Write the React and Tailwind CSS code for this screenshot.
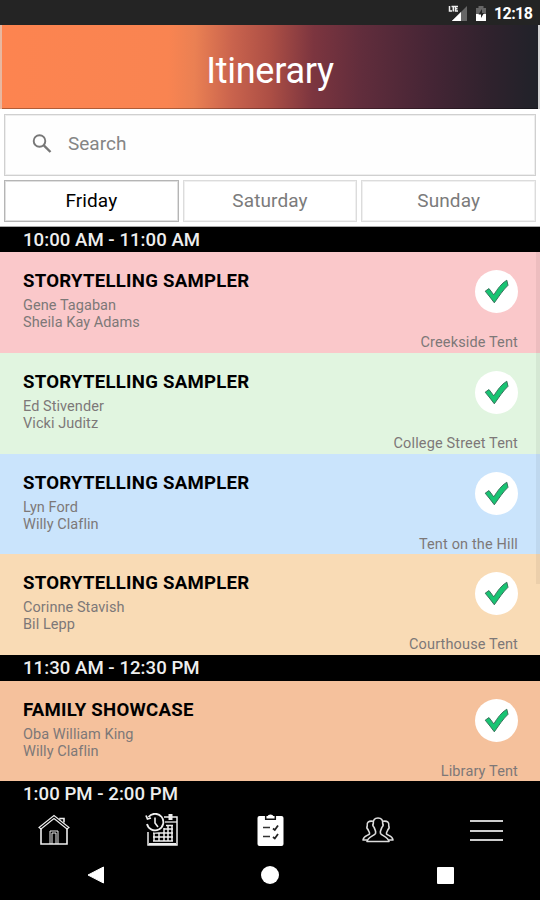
import React, { useState } from 'react';

const days = ['Friday', 'Saturday', 'Sunday'];

const schedule = [
    {
        time: '10:00 AM - 11:00 AM',
        events: [
            { title: 'STORYTELLING SAMPLER', people: ['Gene Tagaban', 'Sheila Kay Adams'], venue: 'Creekside Tent', color: 'bg-[#fac8ca]' },
            { title: 'STORYTELLING SAMPLER', people: ['Ed Stivender', 'Vicki Juditz'], venue: 'College Street Tent', color: 'bg-[#e1f5e0]' },
            { title: 'STORYTELLING SAMPLER', people: ['Lyn Ford', 'Willy Claflin'], venue: 'Tent on the Hill', color: 'bg-[#cae4fc]' },
            { title: 'STORYTELLING SAMPLER', people: ['Corinne Stavish', 'Bil Lepp'], venue: 'Courthouse Tent', color: 'bg-[#f9dbb5]' },
        ],
    },
    {
        time: '11:30 AM - 12:30 PM',
        events: [
            { title: 'FAMILY SHOWCASE', people: ['Oba William King', 'Willy Claflin'], venue: 'Library Tent', color: 'bg-[#f5c19c]' },
        ],
    },
    { time: '1:00 PM - 2:00 PM', events: [] },
];

const StatusBar = () => (
    <div className="h-[25px] shrink-0 bg-[#242424] flex items-center justify-end pr-2 pt-[3px]">
        <svg className="w-5 h-5" viewBox="0 0 20 20">
            <path d="M19 2V17H4Z" fill="#666" />
            <path d="M13 8V17H4Z" fill="#fff" />
            <path d="M0 1H10V9H0Z" fill="#242424" />
            <path d="M13 8.5V17H4Z" fill="#fff" />
            <path d="M1.5 2V7H4M3.5 2.5H7M5.3 2.5V7.5M10 2.5H7.5V7H10M7.5 4.7H9.5" fill="none" stroke="#eee" strokeWidth="1.5" />
        </svg>
        <svg className="w-3 h-5 ml-[7px]" viewBox="0 0 12 20">
            <path d="M3.5 2H8.5V4H11V17H1V4H3.5Z" fill="#666" />
            <path d="M1 10H11V17H1Z" fill="#fff" />
            <path d="M7 5L3.5 10.5H6V14L9 9H7Z" fill="#242424" />
        </svg>
        <span className="ml-[7px] w-[38px] text-base leading-5 font-bold text-white whitespace-nowrap tracking-[-0.6px]">12:18</span>
    </div>
);

const CheckBadge = () => (
    <svg className="w-[43px] h-[43px]" viewBox="0 0 43 43">
        <circle cx="21.5" cy="21.5" r="21.5" fill="#fff" />
        <path d="M10.2 21.2L14 18.6L18.8 24.9C22.4 19 26.3 13.5 31.8 10.2L33 15.3C28 20 24 26.2 19.3 32.8C16.5 29.2 13.7 25 10.2 21.2Z" fill="#18c473" stroke="#38735c" strokeWidth="1" strokeLinejoin="round" />
    </svg>
);

const EventRow = ({ event }) => (
    <div className={`h-[100.7px] shrink-0 pl-[23px] pr-[22px] pt-[18px] flex justify-between ${event.color}`}>
        <div>
            <h2 className="text-[18.6px] leading-[22px] font-bold text-black tracking-[0.26px] whitespace-nowrap">{event.title}</h2>
            <div className="mt-[5px] text-[14.5px] leading-[17px] text-[#7d7878] tracking-[0.06px]">
                {event.people.map((name) => <p key={name}>{name}</p>)}
            </div>
        </div>
        <div className="flex flex-col items-end">
            <CheckBadge />
            <p className="mt-[21px] text-[14.5px] leading-[17px] text-[#7d7878] tracking-[0.14px] whitespace-nowrap">{event.venue}</p>
        </div>
    </div>
);

const HomeIcon = () => (
    <svg className="w-8 h-8" viewBox="0 0 32 32" fill="none" stroke="#eee" strokeWidth="1.6">
        <path d="M1 13.5L16 1.5L31 13.5L29 15L16 4.5L3 15Z" strokeWidth="1.1" />
        <path d="M3 14V30H29V14M22 5.5V4.5H26V8.5" />
        <path d="M12 30V17H20V30M14 30V19H18V30" strokeWidth="1" />
    </svg>
);

const CalendarIcon = () => (
    <svg className="w-[34px] h-[34px]" viewBox="0 0 34 34" fill="none" stroke="#eee" strokeWidth="1.5">
        <path d="M19 4H32V32H3V19" />
        <path d="M4 31H31" strokeWidth="2" />
        <path d="M20 9H32" strokeWidth="1.3" />
        <path d="M25.5 1V7" strokeWidth="4" />
        <path d="M9 20V28M14 20V28M19 15V28M23 13V28M27 13V28M8 20H28M8 24H28M8 28H28M19 16H28M21 12.5H28" strokeWidth="1.5" />
        <circle cx="10" cy="10" r="9.5" fill="#000" stroke="none" />
        <path d="M3.5 4A8.3 8.3 0 1 1 2 11M1 2.5L2.5 6L6 5" strokeWidth="1.8" />
        <path d="M10 4.5V10L13 14" strokeWidth="1.6" />
    </svg>
);

const ClipboardIcon = () => (
    <svg className="w-[27px] h-[34px]" viewBox="0 0 27 34">
        <rect x="0.5" y="3" width="26" height="30" rx="2" fill="#fff" />
        <path d="M8.5 6H18.5V3.5H16.5C16 0.8 11 0.8 10.5 3.5H8.5Z" fill="#fff" />
        <path d="M8.7 3V6.3H18.3V3" fill="none" stroke="#111" strokeWidth="1.5" />
        <path d="M6 14.5H13M6 23.5H13" stroke="#333" strokeWidth="1.4" />
        <path d="M16 15.5L17.8 17L21 12.5M16 24L17.8 25.5L21 21" fill="none" stroke="#222" strokeWidth="1.8" />
    </svg>
);

const PeopleIcon = () => (
    <svg className="w-8 h-[26px]" viewBox="0 0 32 26" fill="none" stroke="#ddd" strokeWidth="1.6" strokeLinejoin="round">
        <path d="M16 1C12.5 1 11 3 11.3 6.5C10.4 8 11.3 9.7 12.2 10.5C13 13.5 14 13.5 13.6 16.2C12.7 19 6 19.2 5 24.5H27C26 19.2 19.3 19 18.4 16.2C18 13.5 19 13.5 19.8 10.5C20.7 9.7 21.6 8 20.7 6.5C21 3 19.5 1 16 1Z" />
        <path d="M11 4.3C7 3.5 4.5 5.3 5.2 9C4.5 10.7 5.3 12 6 12.5C6.5 14.5 8 15 7.5 17C6 18.8 1.5 18.5 1 23H5" />
        <path d="M21 4.3C25 3.5 27.5 5.3 26.8 9C27.5 10.7 26.7 12 26 12.5C25.5 14.5 24 15 24.5 17C26 18.8 30.5 18.5 31 23H27" />
    </svg>
);

const MenuIcon = () => (
    <svg className="w-[33px] h-[23px]" viewBox="0 0 33 23" fill="none" stroke="#ccc" strokeWidth="2">
        <path d="M0 2H33M0 12H33M0 21H33" />
    </svg>
);

const App = () => {
    const [day, setDay] = useState('Friday');

    return (
        <div className="w-[540px] h-[900px] overflow-hidden bg-black flex flex-col font-[Roboto,sans-serif]">
            <StatusBar />

            {/* Header */}
            <header className="mx-0.5 h-[84px] shrink-0 flex items-center justify-center pt-2 border-b border-black/30 bg-[linear-gradient(91deg,#fd8450_0%,#f98451_31%,#ea8053_36%,#c9634d_43%,#ad4f45_50%,#7c353f_58%,#612d3c_67%,#452535_80%,#2f222d_91%,#202229_100%)] shadow-[-2px_0_0_#e8b7a0,2px_0_0_#d5d5d5]">
                <h1 className="text-[36px] leading-[42px] text-white tracking-[-0.25px]">Itinerary</h1>
            </header>

            {/* Search and day tabs */}
            <div className="h-[118px] shrink-0 bg-white px-1 pt-[5px] border-b border-[#aaa]">
                <div className="h-[62px] border-[1.5px] border-[#d0d0d0] shadow-[inset_0_0_0_1px_#eee] bg-[#fefefe] flex items-center pl-[27px] pb-0.5">
                    <svg className="w-5 h-5" viewBox="0 0 20 20" fill="none" stroke="#777" strokeWidth="1.9">
                        <circle cx="7.5" cy="7" r="5.8" />
                        <path d="M11.8 11.3L18.5 18" strokeWidth="2.4" />
                    </svg>
                    <input placeholder="Search" className="ml-4 w-96 bg-transparent text-[19px] leading-6 tracking-[0px] placeholder:text-[#858585] focus:outline-none" />
                </div>
                <div className="mt-1 grid grid-cols-3 gap-1">
                    {days.map((d) => (
                        <button
                            key={d}
                            onClick={() => setDay(d)}
                            className={`h-[42px] border pb-px text-[19px] leading-6 tracking-[0.1px] ${d === day ? 'border-[#b5b5b5] shadow-[inset_0_0_0_1px_#e0e0e0] text-black' : 'border-[#dcdcdc] shadow-[inset_0_0_0_1px_#f0f0f0] text-[#7b7b7b]'}`}
                        >
                            {d}
                        </button>
                    ))}
                </div>
            </div>

            {/* Schedule */}
            <main className="relative flex-1 min-h-0 overflow-hidden">
                {schedule.map((slot) => (
                    <section key={slot.time}>
                        <div className="h-[25.4px] bg-black pl-[23px] text-[18.6px] leading-[27px] font-medium text-[#eee] tracking-[0.04px] whitespace-nowrap">{slot.time}</div>
                        {slot.events.map((event) => <EventRow key={event.venue} event={event} />)}
                    </section>
                ))}
                <div className="absolute right-0 top-[25px] w-1 h-[332px] bg-black/5" />
            </main>

            {/* App tabs */}
            <nav className="h-12 shrink-0 bg-black grid grid-cols-5 place-items-center">
                <HomeIcon />
                <CalendarIcon />
                <ClipboardIcon />
                <PeopleIcon />
                <MenuIcon />
            </nav>

            {/* System navigation */}
            <div className="h-[46px] shrink-0 bg-black flex items-center justify-between pl-[87px] pr-[86px] pb-1">
                <svg className="w-[18px] h-[18px]" viewBox="0 0 18 18"><path d="M1 9L16.5 1V17Z" fill="#fff" stroke="#fff" strokeLinejoin="round" /></svg>
                <div className="w-[18px] h-[18px] -ml-[3px] rounded-full bg-white" />
                <div className="w-[17px] h-[17px] rounded-[1px] bg-white" />
            </div>
        </div>
    );
};

export default App;
